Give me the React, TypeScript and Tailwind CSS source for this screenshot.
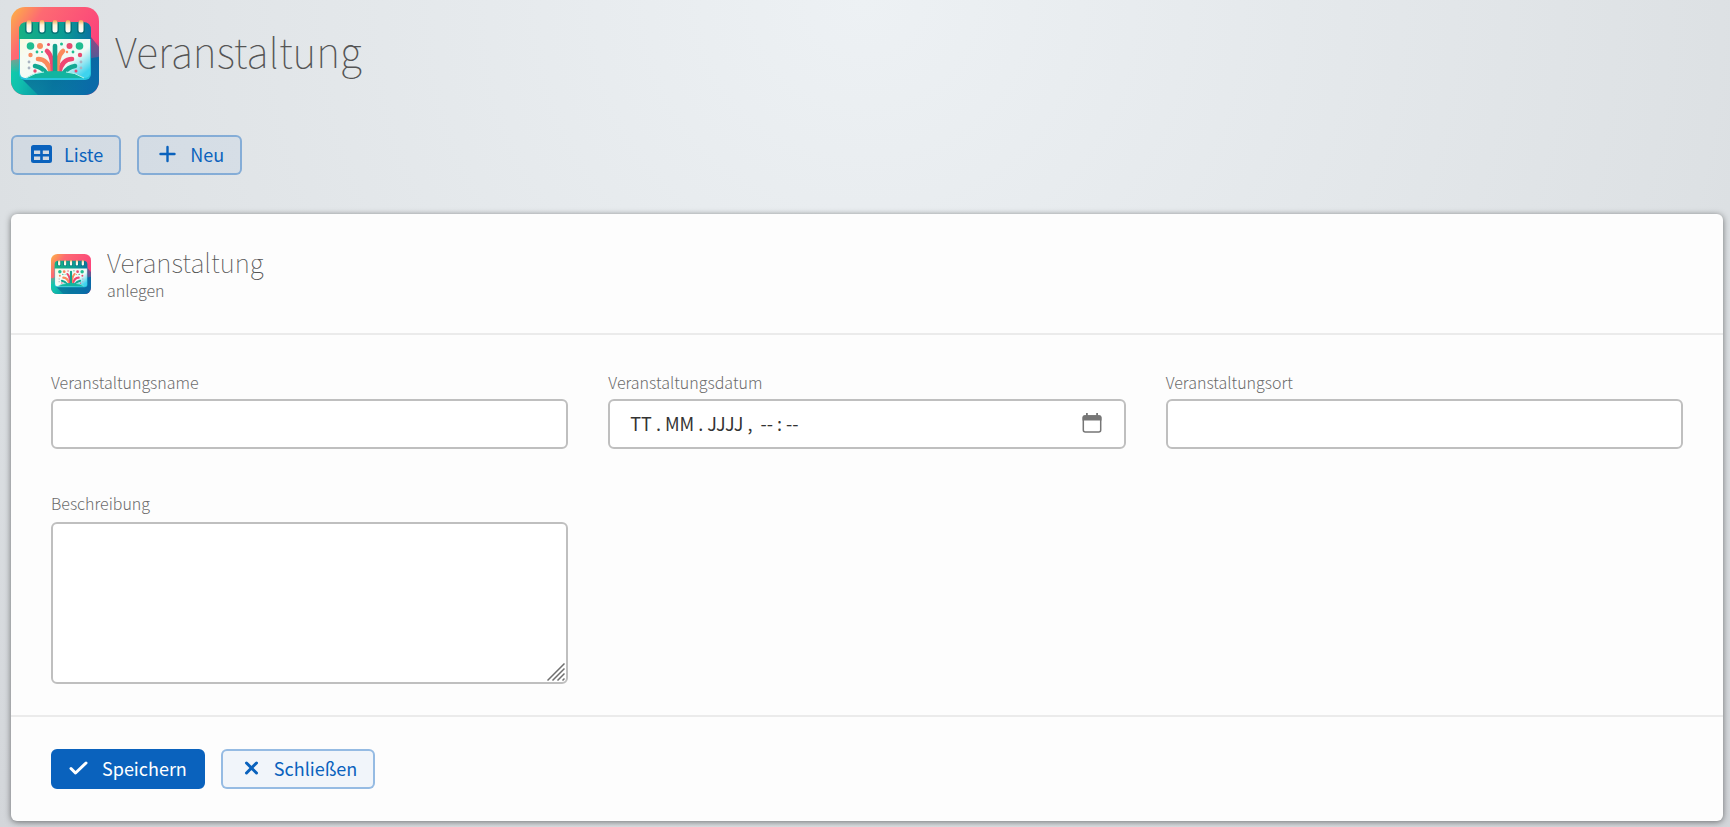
import { useId } from "react";
import type { ReactNode } from "react";

function EventLogo({ className }: { className: string }) {
  const id = useId().replace(/[^a-zA-Z0-9]/g, "");

  return (
    <svg viewBox="0 0 88 88" className={className} aria-hidden="true">
      <defs>
        <linearGradient id={id + "sky"} x1="0" y1="0" x2="0.9" y2="0.6">
          <stop offset="0" stopColor="#fdb544" />
          <stop offset="0.3" stopColor="#fd6a72" />
          <stop offset="1" stopColor="#fb3f7c" />
        </linearGradient>
        <linearGradient id={id + "sea"} x1="0" y1="0.3" x2="1" y2="0.6">
          <stop offset="0" stopColor="#0fd8a8" />
          <stop offset="0.25" stopColor="#10bfae" />
          <stop offset="0.6" stopColor="#0784a0" />
          <stop offset="1" stopColor="#0a6aa8" />
        </linearGradient>
        <linearGradient id={id + "head"} x1="0" y1="0" x2="1" y2="0">
          <stop offset="0" stopColor="#18b184" />
          <stop offset="0.6" stopColor="#0a9c94" />
          <stop offset="1" stopColor="#0b74a0" />
        </linearGradient>
        <linearGradient id={id + "page"} x1="0" y1="0" x2="1" y2="0.8">
          <stop offset="0" stopColor="#fdfbd8" />
          <stop offset="0.3" stopColor="#f6fbf4" />
          <stop offset="0.75" stopColor="#effaf6" />
          <stop offset="1" stopColor="#3fd3ee" />
        </linearGradient>
        <linearGradient id={id + "ring"} x1="0" y1="0" x2="0" y2="1">
          <stop offset="0" stopColor="#f9a04e" />
          <stop offset="0.4" stopColor="#fff3d8" />
          <stop offset="1" stopColor="#ffffff" />
        </linearGradient>
        <linearGradient id={id + "shade"} x1="0.2" y1="0.3" x2="0.9" y2="1">
          <stop offset="0" stopColor="#084a85" stopOpacity="0.75" />
          <stop offset="1" stopColor="#0a6fae" stopOpacity="0.1" />
        </linearGradient>
        <linearGradient id={id + "fade"} x1="0" y1="0" x2="0" y2="1">
          <stop offset="0" stopColor="#fff" stopOpacity="0" />
          <stop offset="1" stopColor="#fff" />
        </linearGradient>
        <mask id={id + "mask"}>
          <path d="M-2 54 L90 34 V50 L-2 66Z" fill={`url(#${id}fade)`} />
          <path d="M-2 65.500 L90 49.500 V90 H-2Z" fill="#fff" />
        </mask>
        <clipPath id={id + "clip"}>
          <rect width="88" height="88" rx="14" />
        </clipPath>
      </defs>
      <g clipPath={`url(#${id}clip)`}>
        <rect width="88" height="88" fill={`url(#${id}sky)`} />
        <rect width="88" height="88" fill={`url(#${id}sea)`} mask={`url(#${id}mask)`} />
        <path d="M9 70 L27 88 H88 V40 L80 30 V72Z" fill={`url(#${id}shade)`} />
        <rect x="8" y="25" width="72" height="48" rx="6" fill="#27c5dc" />
        <rect x="9" y="26" width="70" height="45" rx="5" fill={`url(#${id}page)`} />
        <path d="M8 32 V23 Q8 15 16 15 H72 Q80 15 80 23 V32Z" fill={`url(#${id}head)`} />
        {[18, 31, 44, 57, 70].map((x) => (
          <g key={x}>
            <rect x={x - 4} y="14" width="8" height="13" rx="4" fill="#06686f" opacity="0.75" />
            <rect x={x - 2.5} y="13" width="5" height="12.5" rx="2.5" fill={`url(#${id}ring)`} />
          </g>
        ))}
        <g fill="#20bd91">
          <circle cx="19.5" cy="39" r="3.8" />
          <circle cx="68.5" cy="39" r="3.8" />
          <circle cx="50.5" cy="37" r="1.5" />
          <circle cx="26" cy="45" r="1.4" />
          <circle cx="62" cy="45" r="1.4" />
          <circle cx="31" cy="45" r="1" />
        </g>
        <g fill="#f98b60">
          <circle cx="29" cy="39" r="3" />
          <circle cx="19.5" cy="48" r="2.2" />
          <circle cx="56" cy="45" r="1.2" />
        </g>
        <g fill="#e74b70">
          <circle cx="58.5" cy="39" r="3" />
          <circle cx="69" cy="48" r="2.2" />
          <circle cx="37.5" cy="37.5" r="1.5" />
          <circle cx="24" cy="64" r="1.7" />
          <circle cx="65" cy="64" r="1.5" />
        </g>
        <g fill="#a9b4c2">
          <circle cx="18" cy="55" r="1.4" />
          <circle cx="18" cy="61" r="1.4" />
          <circle cx="70" cy="55" r="1.4" />
          <circle cx="70" cy="61" r="1.4" />
        </g>
        <g fill="none" strokeWidth="4.6" strokeLinecap="round">
          <path d="M24 59 Q31 60 35 66" stroke="#13a893" />
          <path d="M64 59 Q57 60 53 66" stroke="#13a893" />
          <path d="M27 52 Q37 52 40 66" stroke="#fb8a5d" />
          <path d="M61 52 Q51 52 48 66" stroke="#ee4772" />
          <path d="M36 44 Q42 49 42 66" stroke="#ee4772" />
          <path d="M52 44 Q46 49 46 66" stroke="#fb8a5d" />
          <path d="M44 39 V66" stroke="#12a28d" />
        </g>
        <path d="M15 71 Q25 64 44 64 Q63 64 73 71Z" fill="#12b5a0" />
        <path d="M15 71 Q25 65 33 65 M73 71 Q63 65 55 65" fill="none" stroke="#b9f6ee" />
      </g>
    </svg>
  );
}

function TableIcon() {
  return (
    <svg viewBox="0 0 21 18" className="h-[18px] w-[21px]" aria-hidden="true">
      <path
        fill="currentColor"
        fillRule="evenodd"
        d="M2.500 0h16A2.500 2.500 0 0 1 21 2.500v13a2.500 2.500 0 0 1-2.500 2.500h-16A2.500 2.500 0 0 1 0 15.500v-13A2.500 2.500 0 0 1 2.500 0ZM3 5.500v3.500h6.200V5.500Zm8.800 0v3.500H18V5.500ZM3 11.500v3.500h6.200v-3.500Zm8.800 0v3.500H18v-3.500Z"
      />
    </svg>
  );
}

function StrokeIcon({ d, className }: { d: string; className: string }) {
  return (
    <svg viewBox="0 0 21 18" className={"h-[18px] w-[21px] " + className} aria-hidden="true">
      <path d={d} fill="none" stroke="currentColor" strokeLinecap="round" strokeLinejoin="round" />
    </svg>
  );
}

function Button({ icon, children, primary }: { icon: ReactNode; children: string; primary?: boolean }) {
  return (
    <button
      type="button"
      className={
        "flex h-10 items-center gap-3 rounded-md border-2 px-4 pb-0.5 text-lg leading-6 " +
        (primary
          ? "border-[#0a62bd] bg-[#0a62bd] text-white"
          : "border-[#0a62bd]/40 bg-[#0a62bd]/5 pl-[18px] text-[#0a62bd]")
      }
    >
      {icon}
      <span>{children}</span>
    </button>
  );
}

function Field({ id, label, children }: { id: string; label: string; children: ReactNode }) {
  return (
    <div className="flex flex-col gap-1.5">
      <label htmlFor={id} className="text-base leading-[22px] font-light text-[#6b6b6b]">
        {label}
      </label>
      {children}
    </div>
  );
}

const inputClass =
  "block w-full rounded-md border-2 border-[#bfbfbf] bg-white px-5 text-lg text-[#333] outline-none focus:border-[#0a62bd]";

export default function App() {
  return (
    <main className="min-h-screen bg-[radial-gradient(ellipse_at_50%_0%,#edf1f4_0%,#dde1e4_70%,#d3d6da_100%)] pt-[7px] pr-[7px] pb-1.5 pl-[11px] font-['Noto_Sans_CJK_SC',sans-serif] text-[#555]">
      <header className="flex items-center gap-4">
        <EventLogo className="size-[88px]" />
        <h1 className="pb-0.5 text-[41px] leading-[60px] font-thin">Veranstaltung</h1>
      </header>

      <nav className="mt-10 flex gap-4">
        <Button icon={<TableIcon />}>Liste</Button>
        <Button icon={<StrokeIcon d="M10.500 2v14M3.500 9h14" className="stroke-[2.4]" />}>Neu</Button>
      </nav>

      <form
        className="mt-[39px] rounded-md bg-[#fdfdfd] shadow-[0_1px_6px_rgba(0,0,0,0.5)]"
        onSubmit={(e) => e.preventDefault()}
      >
        <div className="flex h-[121px] items-center gap-4 border-b-2 border-[#ebebeb] px-10">
          <EventLogo className="size-10" />
          <div>
            <h2 className="mb-1 text-[26px] leading-7 font-thin">Veranstaltung</h2>
            <p className="text-base leading-5 font-light text-[#666]">anlegen</p>
          </div>
        </div>

        <div className="grid grid-cols-3 gap-x-10 gap-y-[43px] px-10 pt-9 pb-[31px]">
          <Field id="name" label="Veranstaltungsname">
            <input id="name" type="text" className={inputClass + " h-[50px]"} />
          </Field>
          <Field id="datum" label="Veranstaltungsdatum">
            <div className="relative">
              <input
                id="datum"
                type="text"
                defaultValue="TT . MM . JJJJ ,  -- : --"
                className={inputClass + " h-[50px] pb-0.5 whitespace-pre"}
              />
              <button
                type="button"
                aria-label="Datum wählen"
                className="absolute top-3.5 right-6 text-[#767676]"
              >
                <svg viewBox="0 0 20 20" className="size-5" aria-hidden="true">
                  <rect x="1.300" y="2.900" width="17.400" height="16" rx="2" fill="none" stroke="currentColor" strokeWidth="1.500" />
                  <path d="M2.500 2.200h15q2 0 2 2v3.300h-19v-3.300q0-2 2-2ZM4 0h1.800v3H4zM14.200 0H16v3h-1.800z" fill="currentColor" />
                </svg>
              </button>
            </div>
          </Field>
          <Field id="ort" label="Veranstaltungsort">
            <input id="ort" type="text" className={inputClass + " h-[50px]"} />
          </Field>
          <Field id="beschreibung" label="Beschreibung">
            <div className="relative mt-0.5">
              <textarea id="beschreibung" className={inputClass + " h-[162px] resize-none py-3"} />
              <svg
                viewBox="0 0 18 18"
                className="pointer-events-none absolute right-[3px] bottom-[3px] size-[18px] text-[#6f6f6f]"
                aria-hidden="true"
              >
                <path
                  d="M0.500 17.500 17.500 0.500M5.500 17.500 17.500 5.500M10.500 17.500 17.500 10.500M15.500 17.500 17.500 15.500"
                  stroke="currentColor"
                  strokeWidth="1.500"
                />
              </svg>
            </div>
          </Field>
        </div>

        <div className="flex gap-4 border-t-2 border-[#ebebeb] px-10 py-8">
          <Button primary icon={<StrokeIcon d="M2 9.500 6.500 14 17 4" className="stroke-[3]" />}>
            Speichern
          </Button>
          <Button icon={<StrokeIcon d="M5.500 4l10 10M15.500 4l-10 10" className="stroke-[3]" />}>Schließen</Button>
        </div>
      </form>
    </main>
  );
}
